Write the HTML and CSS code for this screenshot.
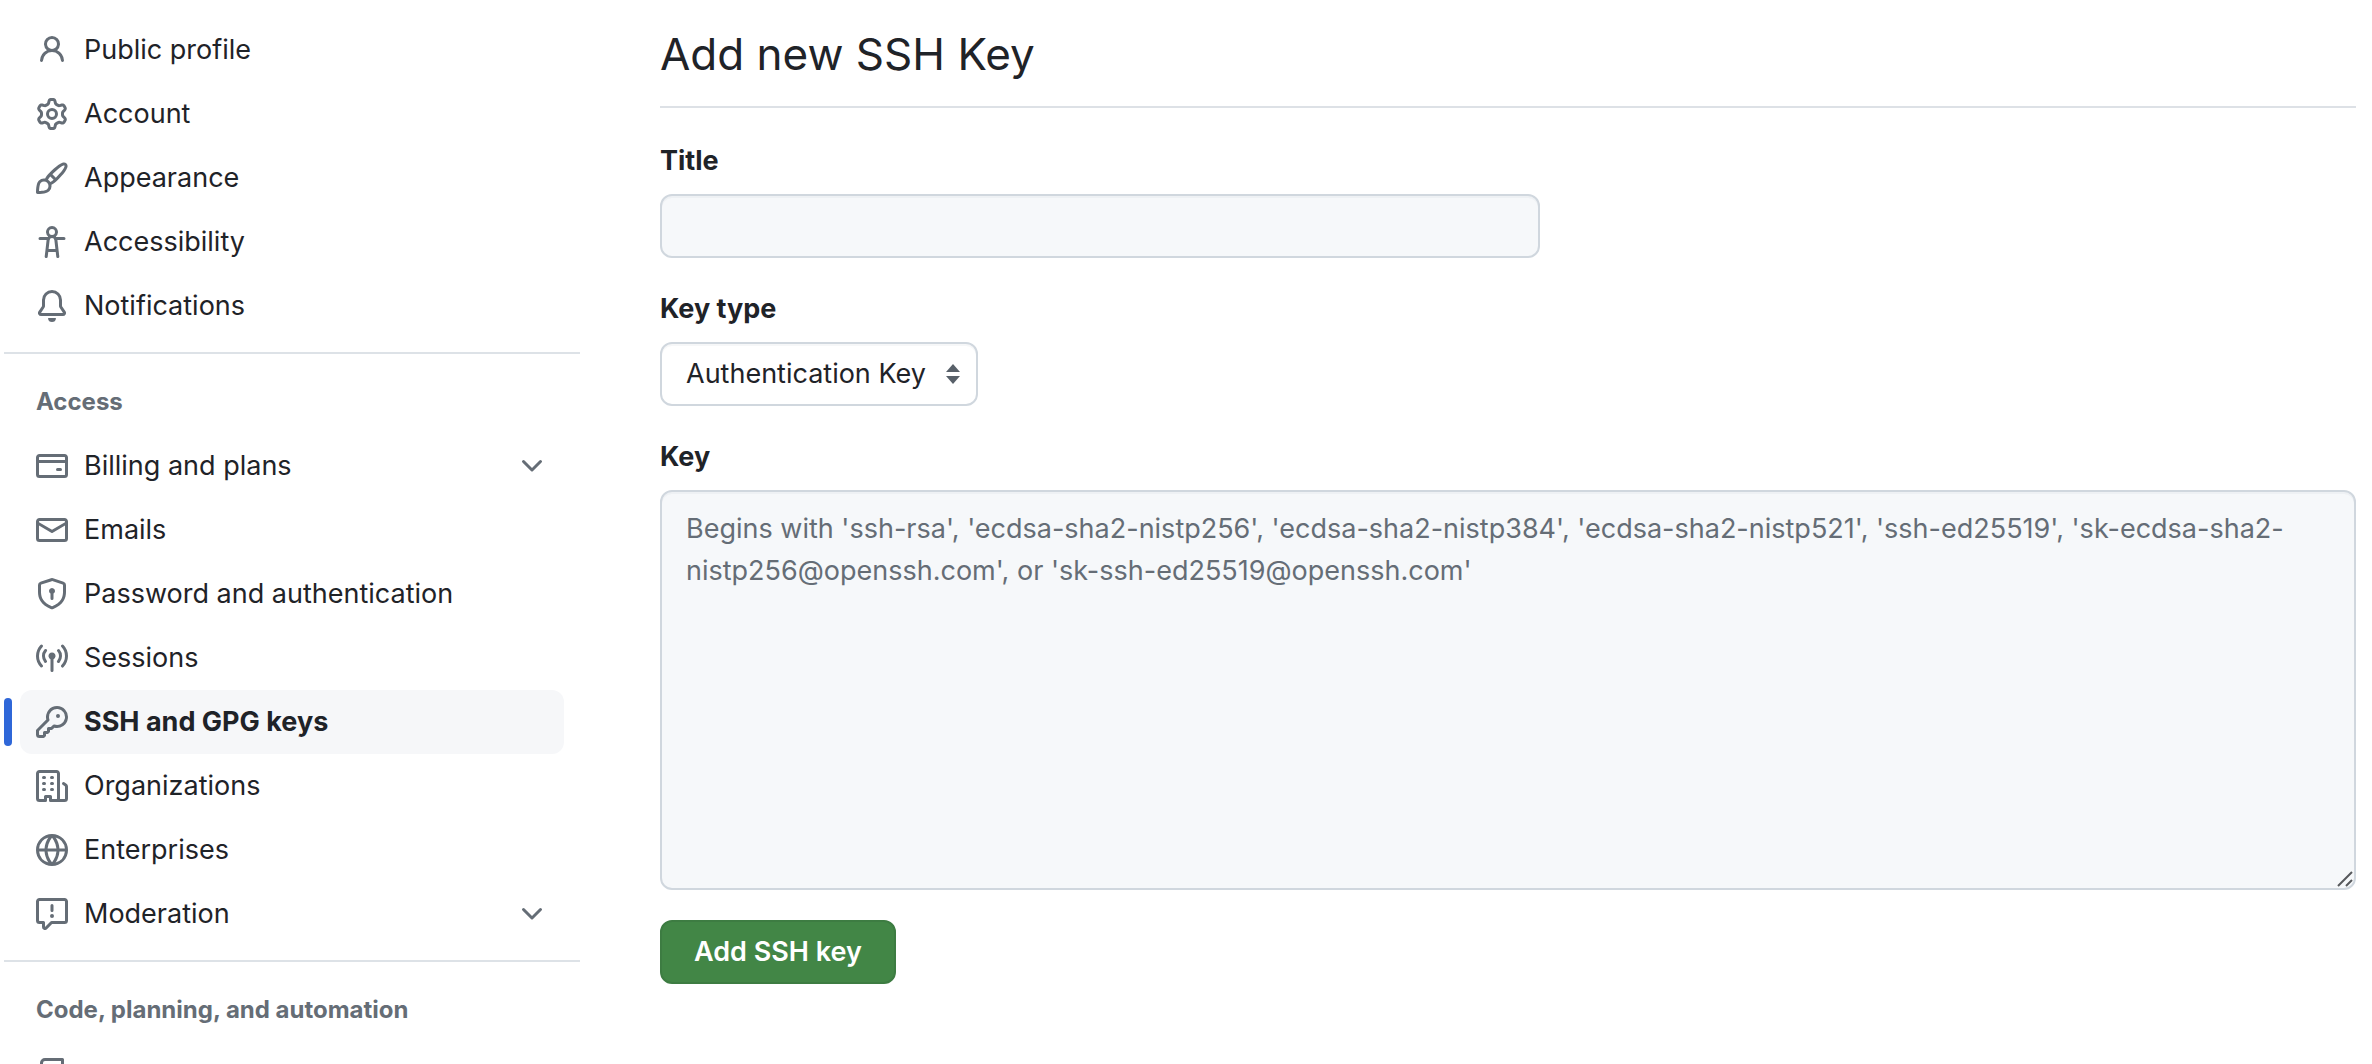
FILE: index.html
```html
<!DOCTYPE html>
<html lang="en">
<head>
  <meta charset="utf-8">
  <title>Add new SSH key</title>
  <meta name="viewport" content="width=device-width, initial-scale=1.0">
  <link rel="stylesheet" href="styles.css">
</head>
<body>
  <div class="layout">
    <nav class="sidebar" aria-label="Settings">
      <ul class="nav-list">
        <li><a href="#" class="nav-item">
          <svg class="icon" viewBox="0 0 16 16" aria-hidden="true"><path d="M10.561 8.073a6.005 6.005 0 0 1 3.432 5.142.75.75 0 1 1-1.498.07 4.5 4.5 0 0 0-8.99 0 .75.75 0 0 1-1.498-.07 6.004 6.004 0 0 1 3.431-5.142 3.999 3.999 0 1 1 5.123 0ZM10.5 5a2.5 2.5 0 1 0-5 0 2.5 2.5 0 0 0 5 0Z"/></svg>
          <span>Public profile</span>
        </a></li>
        <li><a href="#" class="nav-item">
          <svg class="icon" viewBox="0 0 16 16" aria-hidden="true"><path d="M8 0a8.2 8.2 0 0 1 .701.031C9.444.095 9.99.645 10.16 1.29l.288 1.107c.018.066.079.158.212.224.231.114.454.243.668.386.123.082.233.09.299.071l1.103-.303c.644-.176 1.392.021 1.82.63.27.385.506.792.704 1.218.315.675.111 1.422-.364 1.891l-.814.806c-.049.048-.098.147-.088.294.016.257.016.515 0 .772-.01.147.038.246.088.294l.814.806c.475.469.679 1.216.364 1.891a7.977 7.977 0 0 1-.704 1.217c-.428.61-1.176.807-1.82.63l-1.102-.302c-.067-.019-.177-.011-.3.071a5.909 5.909 0 0 1-.668.386c-.133.066-.194.158-.211.224l-.29 1.106c-.168.646-.715 1.196-1.458 1.26a8.006 8.006 0 0 1-1.402 0c-.743-.064-1.289-.614-1.458-1.26l-.289-1.106c-.018-.066-.079-.158-.212-.224a5.738 5.738 0 0 1-.668-.386c-.123-.082-.233-.09-.299-.071l-1.103.303c-.644.176-1.392-.021-1.82-.63a8.12 8.12 0 0 1-.704-1.218c-.315-.675-.111-1.422.363-1.891l.815-.806c.05-.048.098-.147.088-.294a6.214 6.214 0 0 1 0-.772c.01-.147-.038-.246-.088-.294l-.815-.806C.635 6.045.431 5.298.746 4.623a7.92 7.92 0 0 1 .704-1.217c.428-.61 1.176-.807 1.82-.63l1.102.302c.067.019.177.011.3-.071.214-.143.437-.272.668-.386.133-.066.194-.158.211-.224l.29-1.106C6.009.645 6.556.095 7.299.03 7.53.01 7.764 0 8 0Zm-.571 1.525c-.036.003-.108.036-.137.146l-.289 1.105c-.147.561-.549.967-.998 1.189-.173.086-.34.183-.5.29-.417.278-.97.423-1.529.27l-1.103-.303c-.109-.03-.175.016-.195.045-.22.312-.412.644-.573.99-.014.031-.021.11.059.19l.815.806c.411.406.562.957.53 1.456a4.709 4.709 0 0 0 0 .582c.032.499-.119 1.05-.53 1.456l-.815.806c-.081.08-.073.159-.059.19.162.346.353.677.573.989.02.03.085.076.195.046l1.102-.303c.56-.153 1.113-.008 1.53.27.161.107.328.204.501.29.447.222.85.629.997 1.189l.289 1.105c.029.109.101.143.137.146a6.6 6.6 0 0 0 1.142 0c.036-.003.108-.036.137-.146l.289-1.105c.147-.561.549-.967.998-1.189.173-.086.34-.183.5-.29.417-.278.97-.423 1.529-.27l1.103.303c.109.029.175-.016.195-.045.22-.313.411-.644.573-.99.014-.031.021-.11-.059-.19l-.815-.806c-.411-.406-.562-.957-.53-1.456a4.709 4.709 0 0 0 0-.582c-.032-.499.119-1.05.53-1.456l.815-.806c.081-.08.073-.159.059-.19a6.464 6.464 0 0 0-.573-.989c-.02-.03-.085-.076-.195-.046l-1.102.303c-.56.153-1.113.008-1.53-.27a4.44 4.44 0 0 0-.501-.29c-.447-.222-.85-.629-.997-1.189l-.289-1.105c-.029-.11-.101-.143-.137-.146a6.6 6.6 0 0 0-1.142 0ZM11 8a3 3 0 1 1-6 0 3 3 0 0 1 6 0ZM9.5 8a1.5 1.5 0 1 0-3.001.001A1.5 1.5 0 0 0 9.5 8Z"/></svg>
          <span>Account</span>
        </a></li>
        <li><a href="#" class="nav-item">
          <svg class="icon" viewBox="0 0 16 16" aria-hidden="true"><path d="M11.134 1.535c.7-.509 1.416-.942 2.076-1.155.649-.21 1.463-.267 2.069.34.603.601.568 1.411.368 2.07-.202.668-.624 1.39-1.125 2.096-1.011 1.424-2.496 2.987-3.775 4.249-1.098 1.084-2.132 1.839-3.04 2.3a3.744 3.744 0 0 1-1.055 3.217c-.431.431-1.065.691-1.657.861-.614.177-1.294.287-1.914.357A21.151 21.151 0 0 1 .797 16H.743l.007-.75H.749L.742 16a.75.75 0 0 1-.743-.742l.743-.008-.742.007v-.054a21.25 21.25 0 0 1 .13-2.284c.067-.647.187-1.287.358-1.914.17-.591.43-1.226.86-1.657a3.746 3.746 0 0 1 3.227-1.054c.466-.893 1.225-1.907 2.314-2.982 1.271-1.255 2.833-2.75 4.245-3.777ZM1.62 13.089c-.051.464-.086.929-.104 1.395.466-.018.932-.053 1.396-.104a10.511 10.511 0 0 0 1.668-.309c.526-.151.856-.325 1.011-.48a2.25 2.25 0 1 0-3.182-3.182c-.155.155-.329.485-.48 1.01a10.515 10.515 0 0 0-.309 1.67Zm10.396-10.34c-1.224.89-2.605 2.189-3.822 3.384l1.718 1.718c1.21-1.205 2.51-2.597 3.387-3.833.47-.662.78-1.227.912-1.662.134-.444.032-.551.009-.575h-.001V1.78c-.014-.014-.113-.113-.548.027-.432.14-.995.462-1.655.942Zm-4.832 7.266-.001.001a9.859 9.859 0 0 0 1.63-1.142L7.155 7.216a9.7 9.7 0 0 0-1.161 1.607c.482.302.889.71 1.19 1.192Z"/></svg>
          <span>Appearance</span>
        </a></li>
        <li><a href="#" class="nav-item">
          <svg class="icon" viewBox="0 0 16 16" aria-hidden="true"><path d="M9.923 5.302c.063.063.122.129.178.198H14A.75.75 0 0 1 14 7h-3.3l.578 5.163.362 2.997a.75.75 0 0 1-1.49.18L9.868 13H6.132l-.282 2.34a.75.75 0 0 1-1.49-.18l.362-2.997L5.3 7H2a.75.75 0 0 1 0-1.5h3.9a2.54 2.54 0 0 1 .176-.198 3 3 0 1 1 3.847 0ZM9.2 7.073h-.001a1.206 1.206 0 0 0-2.398 0L6.305 11.5h3.39ZM9.5 3a1.5 1.5 0 1 0-3.001.001A1.5 1.5 0 0 0 9.5 3Z"/></svg>
          <span>Accessibility</span>
        </a></li>
        <li><a href="#" class="nav-item">
          <svg class="icon" viewBox="0 0 16 16" aria-hidden="true"><path d="M8 16a2 2 0 0 0 1.985-1.75c.017-.137-.097-.25-.235-.25h-3.5c-.138 0-.252.113-.235.25A2 2 0 0 0 8 16ZM3 5a5 5 0 0 1 10 0v2.947c0 .05.015.098.042.139l1.703 2.555A1.519 1.519 0 0 1 13.482 13H2.518a1.516 1.516 0 0 1-1.263-2.36l1.703-2.554A.255.255 0 0 0 3 7.947Zm5-3.5A3.5 3.5 0 0 0 4.5 5v2.947c0 .346-.102.683-.294.97l-1.703 2.556a.017.017 0 0 0-.003.01l.001.006c0 .002.002.004.004.006l.006.004.007.001h10.964l.007-.001.006-.004.004-.006.001-.007a.017.017 0 0 0-.003-.01l-1.703-2.554a1.745 1.745 0 0 1-.294-.97V5A3.5 3.5 0 0 0 8 1.5Z"/></svg>
          <span>Notifications</span>
        </a></li>
      </ul>

      <h2 class="nav-heading">Access</h2>
      <ul class="nav-list">
        <li><button type="button" class="nav-item" aria-expanded="false">
          <svg class="icon" viewBox="0 0 16 16" aria-hidden="true"><path d="M10.75 9a.75.75 0 0 0 0 1.5h1.5a.75.75 0 0 0 0-1.5h-1.5Z"/><path d="M0 3.75C0 2.784.784 2 1.75 2h12.5c.966 0 1.75.784 1.75 1.75v8.5A1.75 1.75 0 0 1 14.25 14H1.75A1.75 1.75 0 0 1 0 12.25ZM14.5 6.5h-13v5.75c0 .138.112.25.25.25h12.5a.25.25 0 0 0 .25-.25Zm0-2.75a.25.25 0 0 0-.25-.25H1.75a.25.25 0 0 0-.25.25V5h13Z"/></svg>
          <span>Billing and plans</span>
          <svg class="icon chevron" viewBox="0 0 16 16" aria-hidden="true"><path d="M12.78 5.22a.749.749 0 0 1 0 1.06l-4.25 4.25a.749.749 0 0 1-1.06 0L3.22 6.28a.749.749 0 1 1 1.06-1.06L8 8.939l3.72-3.719a.749.749 0 0 1 1.06 0Z"/></svg>
        </button></li>
        <li><a href="#" class="nav-item">
          <svg class="icon" viewBox="0 0 16 16" aria-hidden="true"><path d="M1.75 2h12.5c.966 0 1.75.784 1.75 1.75v8.5A1.75 1.75 0 0 1 14.25 14H1.75A1.75 1.75 0 0 1 0 12.25v-8.5C0 2.784.784 2 1.75 2ZM1.5 12.251c0 .138.112.25.25.25h12.5a.25.25 0 0 0 .25-.25V5.809L8.38 9.397a.75.75 0 0 1-.76 0L1.5 5.809v6.442Zm13-8.181v-.32a.25.25 0 0 0-.25-.25H1.75a.25.25 0 0 0-.25.25v.32L8 7.88Z"/></svg>
          <span>Emails</span>
        </a></li>
        <li><a href="#" class="nav-item">
          <svg class="icon" viewBox="0 0 16 16" aria-hidden="true"><path d="m8.533.133 5.25 1.68A1.75 1.75 0 0 1 15 3.48V7c0 1.566-.32 3.182-1.303 4.682-.983 1.498-2.585 2.813-5.032 3.855a1.697 1.697 0 0 1-1.33 0c-2.447-1.042-4.049-2.357-5.032-3.855C1.32 10.182 1 8.566 1 7V3.48a1.755 1.755 0 0 1 1.217-1.667l5.25-1.68a1.748 1.748 0 0 1 1.066 0Zm-.61 1.429.001.001-5.25 1.68a.251.251 0 0 0-.174.237V7c0 1.36.275 2.666 1.057 3.859.784 1.194 2.121 2.342 4.366 3.298a.196.196 0 0 0 .154 0c2.245-.957 3.582-2.103 4.366-3.297C13.225 9.666 13.5 8.358 13.5 7V3.48a.25.25 0 0 0-.174-.238l-5.25-1.68a.25.25 0 0 0-.153 0ZM9.5 6.5c0 .536-.286 1.032-.75 1.3v2.45a.75.75 0 0 1-1.5 0V7.8A1.5 1.5 0 1 1 9.5 6.5Z"/></svg>
          <span>Password and authentication</span>
        </a></li>
        <li><a href="#" class="nav-item">
          <svg class="icon" viewBox="0 0 16 16" aria-hidden="true"><path d="M8.75 8.582v5.668a.75.75 0 0 1-1.5 0V8.582a1.75 1.75 0 1 1 1.5 0Zm3.983-7.125a.75.75 0 0 1 1.06.026A7.976 7.976 0 0 1 16 7c0 2.139-.84 4.083-2.207 5.517a.75.75 0 1 1-1.086-1.034A6.474 6.474 0 0 0 14.5 7a6.474 6.474 0 0 0-1.793-4.483.75.75 0 0 1 .026-1.06Zm-9.466 0c.3.286.312.76.026 1.06A6.474 6.474 0 0 0 1.5 7a6.47 6.47 0 0 0 1.793 4.483.75.75 0 0 1-1.086 1.034A7.973 7.973 0 0 1 0 7c0-2.139.84-4.083 2.207-5.517a.75.75 0 0 1 1.06-.026Zm8.556 2.321A4.988 4.988 0 0 1 13 7a4.988 4.988 0 0 1-1.177 3.222.75.75 0 1 1-1.146-.967A3.487 3.487 0 0 0 11.5 7c0-.86-.309-1.645-.823-2.255a.75.75 0 0 1 1.146-.967Zm-6.492.958A3.48 3.48 0 0 0 4.5 7a3.48 3.48 0 0 0 .823 2.255.75.75 0 0 1-1.146.967A4.981 4.981 0 0 1 3 7a4.982 4.982 0 0 1 1.188-3.236.75.75 0 1 1 1.143.972Z"/></svg>
          <span>Sessions</span>
        </a></li>
        <li><a href="#" class="nav-item current" aria-current="page">
          <svg class="icon" viewBox="0 0 16 16" aria-hidden="true"><path d="M10.5 0a5.499 5.499 0 1 1-1.288 10.848l-.932.932a.749.749 0 0 1-.53.22H7v.75a.749.749 0 0 1-.22.53l-.5.5a.749.749 0 0 1-.53.22H5v.75a.749.749 0 0 1-.22.53l-.5.5a.749.749 0 0 1-.53.22h-2A1.75 1.75 0 0 1 0 14.25v-2c0-.199.079-.389.22-.53l4.932-4.932A5.5 5.5 0 0 1 10.5 0Zm-4 5.5c-.001.431.069.86.205 1.269a.75.75 0 0 1-.181.768L1.5 12.56v1.69c0 .138.112.25.25.25h1.69l.06-.06v-1.19a.75.75 0 0 1 .75-.75h1.19l.06-.06v-1.19a.75.75 0 0 1 .75-.75h1.19l1.023-1.025a.75.75 0 0 1 .768-.18A4 4 0 1 0 6.5 5.5ZM11 6a1 1 0 1 1 0-2 1 1 0 0 1 0 2Z"/></svg>
          <span>SSH and GPG keys</span>
        </a></li>
        <li><a href="#" class="nav-item">
          <svg class="icon" viewBox="0 0 16 16" aria-hidden="true"><path d="M1.75 16A1.75 1.75 0 0 1 0 14.25V1.75C0 .784.784 0 1.75 0h8.5C11.216 0 12 .784 12 1.75v12.5c0 .085-.006.168-.018.25h2.268a.25.25 0 0 0 .25-.25V8.285a.25.25 0 0 0-.111-.208l-1.055-.703a.749.749 0 1 1 .832-1.248l1.055.703c.487.325.779.871.779 1.456v5.965A1.75 1.75 0 0 1 14.25 16h-3.5a.766.766 0 0 1-.197-.026c-.099.017-.2.026-.303.026h-3a.75.75 0 0 1-.75-.75V14h-1v1.25a.75.75 0 0 1-.75.75Zm-.25-1.75c0 .138.112.25.25.25H4v-1.25a.75.75 0 0 1 .75-.75h2.5a.75.75 0 0 1 .75.75v1.25h2.25a.25.25 0 0 0 .25-.25V1.75a.25.25 0 0 0-.25-.25h-8.5a.25.25 0 0 0-.25.25ZM3.75 6h.5a.75.75 0 0 1 0 1.5h-.5a.75.75 0 0 1 0-1.5ZM3 3.75A.75.75 0 0 1 3.75 3h.5a.75.75 0 0 1 0 1.5h-.5A.75.75 0 0 1 3 3.75Zm4 3A.75.75 0 0 1 7.75 6h.5a.75.75 0 0 1 0 1.5h-.5A.75.75 0 0 1 7 6.75ZM7.75 3h.5a.75.75 0 0 1 0 1.5h-.5a.75.75 0 0 1 0-1.5ZM3 9.75A.75.75 0 0 1 3.75 9h.5a.75.75 0 0 1 0 1.5h-.5A.75.75 0 0 1 3 9.75ZM7.75 9h.5a.75.75 0 0 1 0 1.5h-.5a.75.75 0 0 1 0-1.5Z"/></svg>
          <span>Organizations</span>
        </a></li>
        <li><a href="#" class="nav-item">
          <svg class="icon" viewBox="0 0 16 16" aria-hidden="true"><path d="M8 0a8 8 0 1 1 0 16A8 8 0 0 1 8 0ZM5.78 8.75a9.64 9.64 0 0 0 1.363 4.177c.255.426.542.832.857 1.215.245-.296.551-.705.857-1.215A9.64 9.64 0 0 0 10.22 8.75Zm4.44-1.5a9.64 9.64 0 0 0-1.363-4.177c-.307-.51-.612-.919-.857-1.215a9.927 9.927 0 0 0-.857 1.215A9.64 9.64 0 0 0 5.78 7.25Zm-5.944 1.5H1.543a6.507 6.507 0 0 0 4.666 5.5c-.123-.181-.24-.365-.352-.552-.715-1.192-1.437-2.874-1.581-4.948Zm-2.733-1.5h2.733c.144-2.074.866-3.756 1.58-4.948.12-.197.237-.381.353-.552a6.507 6.507 0 0 0-4.666 5.5Zm10.181 1.5c-.144 2.074-.866 3.756-1.58 4.948-.12.197-.237.381-.353.552a6.507 6.507 0 0 0 4.666-5.5Zm2.733-1.5a6.507 6.507 0 0 0-4.666-5.5c.123.181.24.365.353.552.714 1.192 1.436 2.874 1.58 4.948Z"/></svg>
          <span>Enterprises</span>
        </a></li>
        <li><button type="button" class="nav-item" aria-expanded="false">
          <svg class="icon" viewBox="0 0 16 16" aria-hidden="true"><path d="M0 1.75C0 .784.784 0 1.75 0h12.5C15.216 0 16 .784 16 1.75v9.5A1.75 1.75 0 0 1 14.25 13H8.06l-2.573 2.573A1.458 1.458 0 0 1 3 14.543V13H1.75A1.75 1.75 0 0 1 0 11.25Zm1.75-.25a.25.25 0 0 0-.25.25v9.5c0 .138.112.25.25.25h2a.75.75 0 0 1 .75.75v2.19l2.72-2.72a.749.749 0 0 1 .53-.22h6.5a.25.25 0 0 0 .25-.25v-9.5a.25.25 0 0 0-.25-.25Zm7 2.25v2.5a.75.75 0 0 1-1.5 0v-2.5a.75.75 0 0 1 1.5 0ZM9 9a1 1 0 1 1-2 0 1 1 0 0 1 2 0Z"/></svg>
          <span>Moderation</span>
          <svg class="icon chevron" viewBox="0 0 16 16" aria-hidden="true"><path d="M12.78 5.22a.749.749 0 0 1 0 1.06l-4.25 4.25a.749.749 0 0 1-1.06 0L3.22 6.28a.749.749 0 1 1 1.06-1.06L8 8.939l3.72-3.719a.749.749 0 0 1 1.06 0Z"/></svg>
        </button></li>
      </ul>

      <h2 class="nav-heading">Code, planning, and automation</h2>
      <ul class="nav-list">
        <li><a href="#" class="nav-item" aria-label="Repositories">
          <svg class="icon" viewBox="0 0 16 16" aria-hidden="true"><path d="M2 2.5A2.5 2.5 0 0 1 4.5 0h8.75a.75.75 0 0 1 .75.75v12.5a.75.75 0 0 1-.75.75h-2.5a.75.75 0 0 1 0-1.5h1.75v-2h-8a1 1 0 0 0-.714 1.7.75.75 0 1 1-1.072 1.05A2.495 2.495 0 0 1 2 11.5Zm10.5-1h-8a1 1 0 0 0-1 1v6.708A2.486 2.486 0 0 1 4.5 9h8Z"/></svg>
        </a></li>
      </ul>
    </nav>

    <main class="content">
      <h1 class="page-title">Add new SSH Key</h1>
      <form class="key-form">
        <div class="field">
          <label for="key_title">Title</label>
          <input type="text" id="key_title" class="control title-input">
        </div>
        <div class="field">
          <label for="key_type">Key type</label>
          <select id="key_type" class="control type-select">
            <option>Authentication Key</option>
          </select>
        </div>
        <div class="field">
          <label for="key_body">Key</label>
          <div class="key-box">
            <textarea id="key_body" class="control key-input" placeholder="Begins with 'ssh-rsa', 'ecdsa-sha2-nistp256', 'ecdsa-sha2-nistp384', 'ecdsa-sha2-nistp521', 'ssh-ed25519', 'sk-ecdsa-sha2-nistp256@openssh.com', or 'sk-ssh-ed25519@openssh.com'"></textarea>
            <svg class="grip" viewBox="0 0 16 16" aria-hidden="true"><path d="M1 15 15 1M9 15l6-6"/></svg>
          </div>
        </div>
        <button type="submit" class="btn-primary">Add SSH key</button>
      </form>
    </main>
  </div>
</body>
</html>
```

FILE: styles.css
```css
* {
  box-sizing: border-box;
  margin: 0;
  padding: 0;
}

body {
  background: #fff;
  color: #1f2328;
  font-family: Inter, "Liberation Sans", sans-serif;
  font-size: 27px;
  line-height: 42px;
}

ul {
  list-style: none;
}

button,
input,
select,
textarea {
  color: inherit;
  font: inherit;
}

.layout {
  display: grid;
  grid-template-columns: 576px 1fr;
  gap: 80px;
  height: 100vh;
  padding: 0 16px 0 4px;
}

/* sidebar */
.sidebar {
  overflow: auto;
  padding-top: 18px;
  scrollbar-width: none;
}

.nav-list {
  padding: 0 16px;
}

.nav-item {
  position: relative;
  display: flex;
  align-items: center;
  gap: 16px;
  width: 100%;
  height: 64px;
  padding: 0 16px;
  border: 0;
  border-radius: 12px;
  background: none;
  color: inherit;
  text-align: left;
  text-decoration: none;
}

.nav-item:hover,
.nav-item.current {
  background: #f6f7f9;
}

.nav-item.current {
  font-weight: 700;
}

.nav-item.current::before {
  content: "";
  position: absolute;
  top: 8px;
  left: -16px;
  width: 8px;
  height: 48px;
  border-radius: 4px;
  background: #2f67d8;
}

.icon {
  flex: none;
  width: 32px;
  height: 32px;
  fill: #656d76;
}

.chevron {
  margin-left: auto;
}

.nav-heading {
  margin-top: 14px;
  padding: 28px 32px 12px;
  border-top: 2px solid #dde2e7;
  color: #656d76;
  font-size: 24px;
  font-weight: 700;
  line-height: 40px;
}

/* form */
.content {
  min-width: 0;
  padding-top: 18px;
}

.page-title {
  padding-bottom: 16px;
  border-bottom: 2px solid #dde1e6;
  font-size: 44px;
  font-weight: 400;
  line-height: 72px;
}

.key-form {
  display: flex;
  flex-direction: column;
  align-items: flex-start;
  gap: 30px;
  padding-top: 32px;
}

.field {
  display: flex;
  flex-direction: column;
  align-items: flex-start;
  gap: 12px;
  width: 100%;
}

.field label {
  font-weight: 700;
}

.control {
  height: 64px;
  padding: 0 24px;
  border: 2px solid #d0d7de;
  border-radius: 12px;
  background-color: #f6f8fa;
  box-shadow: inset 0 2px 0 rgba(208, 215, 222, 0.2);
}

.title-input {
  width: 100%;
  max-width: 880px;
}

.type-select {
  padding-right: 50px;
  appearance: none;
  background: #fff url("data:image/svg+xml,%3Csvg xmlns='http://www.w3.org/2000/svg' width='14' height='20' fill='%23586069'%3E%3Cpath d='M7 0l7 8H0zM7 20l7-8H0z'/%3E%3C/svg%3E") no-repeat right 16px center;
}

.key-box {
  position: relative;
  width: 100%;
}

.key-input {
  display: block;
  width: 100%;
  height: 400px;
  padding: 16px 24px;
  resize: vertical;
}

.key-input::placeholder {
  color: #656d76;
}

.key-input::-webkit-resizer {
  background: none;
}

.grip {
  position: absolute;
  right: 3px;
  bottom: 3px;
  width: 16px;
  height: 16px;
  fill: none;
  stroke: #57595c;
  stroke-width: 2;
  pointer-events: none;
}

.btn-primary {
  height: 64px;
  padding: 0 32px;
  border: 2px solid #3d7c42;
  border-radius: 12px;
  background: #428646;
  color: #fff;
  font-weight: 600;
}
```
